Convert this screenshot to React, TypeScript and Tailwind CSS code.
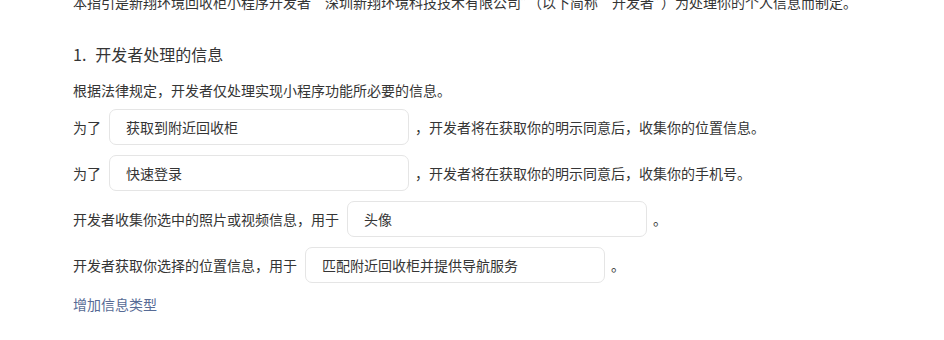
const rows = [
  { before: "为了", value: "获取到附近回收柜", after: "，开发者将在获取你的明示同意后，收集你的位置信息。" },
  { before: "为了", value: "快速登录", after: "，开发者将在获取你的明示同意后，收集你的手机号。" },
  { before: "开发者收集你选中的照片或视频信息，用于", value: "头像", after: "。" },
  { before: "开发者获取你选择的位置信息，用于", value: "匹配附近回收柜并提供导航服务", after: "。" },
]

export default function App() {
  return (
    <div
      className="w-[944px] h-[340px] overflow-hidden bg-white text-[#353535]"
      style={{ fontFamily: '"Noto Sans CJK SC", "Noto Sans", sans-serif' }}
    >
      <div className="pl-[73px] -mt-[9px] flex flex-col">
        <p className="text-[14px] leading-[22px]">
          本指引是新翔环境回收柜小程序开发者“深圳新翔环境科技技术有限公司”（以下简称“开发者”）为处理你的个人信息而制定。
        </p>

        <h2 className="mt-[29px] text-[16px] leading-[24px] flex">
          <span className="mr-[9px]">1.</span>
          <span>开发者处理的信息</span>
        </h2>

        <p className="mt-[12px] text-[14px] leading-[24px]">根据法律规定，开发者仅处理实现小程序功能所必要的信息。</p>

        <div className="mt-[7px] flex flex-col gap-[10px]">
          {rows.map((r, i) => (
            <div key={i} className="flex items-center text-[14px] h-[36px]">
              <span>{r.before}</span>
              <div className="ml-[8px] w-[300px] h-[36px] border border-[#e5e5e5] rounded-[7px] flex items-center px-[16px]">
                {r.value}
              </div>
              <span className="ml-[6px]">{r.after}</span>
            </div>
          ))}
        </div>

        <a className="mt-[10px] text-[14px] leading-[22px] text-[#576b95]">增加信息类型</a>
      </div>
    </div>
  )
}
